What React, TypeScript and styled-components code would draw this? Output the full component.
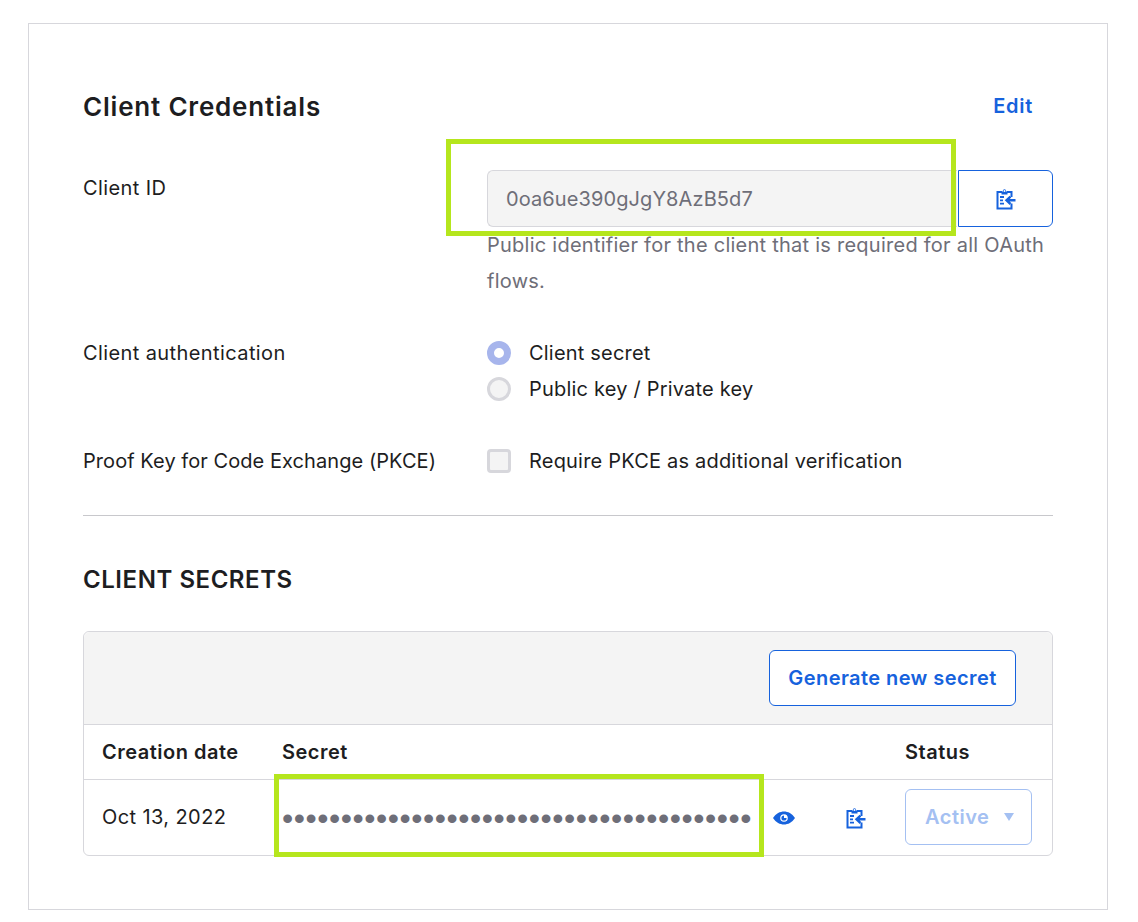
import React from 'react';
import styled, { createGlobalStyle } from 'styled-components';

const GlobalStyle = createGlobalStyle`
  html, body {
    margin: 0;
    padding: 0;
    background: #fff;
  }
  body {
    font-family: 'Inter', 'Liberation Sans', sans-serif;
    color: #1d1d21;
  }
`;

const BLUE = '#1662dd';

const ClipboardIcon = () => (
  <svg width="20" height="22" viewBox="0 0 20 22" fill="none">
    <path d="M6 4H1.5V20.5H15.5V15.5M15.5 9V4H11" stroke={BLUE} strokeWidth="2" />
    <path d="M5.5 6.5V3.5H6.8C6.8 .4 10.2 .4 10.2 3.5H11.5V6.5Z" fill={BLUE} />
    <circle cx="8.5" cy="3" r="1" fill="#fff" />
    <path d="M4 9H8M4 12.3H7M4 15.6H8" stroke={BLUE} strokeWidth="1.8" />
    <path d="M19.5 12.3H12M14.5 8.6L10.5 12.3L14.5 16" stroke={BLUE} strokeWidth="2.4" />
  </svg>
);

const EyeIcon = () => (
  <svg width="22" height="14" viewBox="0 0 22 14">
    <path
      fillRule="evenodd"
      d="M0 7C3 2.5 7 .5 11 .5S19 2.5 22 7C19 11.5 15 13.5 11 13.5S3 11.5 0 7ZM11 3.2A3.8 3.8 0 1 0 11 10.8 3.8 3.8 0 1 0 11 3.2Z"
      fill={BLUE}
    />
    <path d="M11 4.4A2.6 2.6 0 1 0 13.6 7H11Z" fill={BLUE} />
  </svg>
);

export default function App() {
  return (
    <>
      <GlobalStyle />
      <Card>
        <Header>
          <Title>Client Credentials</Title>
          <EditLink>Edit</EditLink>
        </Header>

        <Row>
          <Label>Client ID</Label>
          <Field>
            <CopyGroup>
              <ReadOnlyInput>0oa6ue390gJgY8AzB5d7</ReadOnlyInput>
              <CopyButton aria-label="Copy"><ClipboardIcon /></CopyButton>
              <Highlight />
            </CopyGroup>
            <Hint>Public identifier for the client that is required for all OAuth flows.</Hint>
          </Field>
        </Row>

        <AuthRow>
          <Label>Client authentication</Label>
          <Options>
            <Option><Radio $checked />Client secret</Option>
            <Option><Radio />Public key / Private key</Option>
          </Options>
        </AuthRow>

        <PkceRow>
          <Label $tight>Proof Key for Code Exchange (PKCE)</Label>
          <Option><Checkbox />Require PKCE as additional verification</Option>
        </PkceRow>

        <Divider />

        <SectionTitle>CLIENT SECRETS</SectionTitle>

        <Table>
          <TableBar>
            <GenerateButton>Generate new secret</GenerateButton>
          </TableBar>
          <HeadRow>
            <HeadCell>Creation date</HeadCell>
            <HeadCell>Secret</HeadCell>
            <HeadCell>Status</HeadCell>
          </HeadRow>
          <BodyRow>
            <DateCell>Oct 13, 2022</DateCell>
            <SecretCell>
              <Dots>{'•'.repeat(40)}</Dots>
              <EyeSlot><EyeIcon /></EyeSlot>
              <CopySlot><ClipboardIcon /></CopySlot>
              <SecretHighlight />
            </SecretCell>
            <StatusSelect>
              Active
              <Caret />
            </StatusSelect>
          </BodyRow>
        </Table>
      </Card>
    </>
  );
}

const Card = styled.div`
  box-sizing: border-box;
  width: 1080px;
  height: 887px;
  margin: 23px 0 0 28px;
  padding: 60px 54px 0 54px;
  border: 1px solid #d7d7dc;
`;
const Header = styled.div`
  display: flex;
  align-items: center;
  justify-content: space-between;
  padding-right: 20px;
  height: 44px;
  margin-bottom: 42px;
`;
const Title = styled.h2`
  margin: 0;
  font-size: 26px;
  font-weight: 600;
  letter-spacing: 0.8px;
`;
const EditLink = styled.a`
  font-size: 20px;
  font-weight: 600;
  letter-spacing: 0.7px;
  color: ${BLUE};
`;
const Row = styled.div`
  display: grid;
  grid-template-columns: 404px 566px;
`;
const AuthRow = styled(Row)`
  margin-top: 36px;
`;
const PkceRow = styled(Row)`
  margin-top: 36px;
  align-items: center;
`;
const Label = styled.div<{ $tight?: boolean }>`
  font-size: 20px;
  line-height: 36px;
  letter-spacing: ${(p) => (p.$tight ? '0.06px' : '0.4px')};
`;
const Field = styled.div`
  display: flex;
  flex-direction: column;
`;
const CopyGroup = styled.div`
  position: relative;
  display: flex;
  height: 57px;
`;
const ReadOnlyInput = styled.div`
  box-sizing: border-box;
  flex: 1;
  display: flex;
  align-items: center;
  padding-left: 18px;
  background: #f4f4f4;
  border: 1px solid #d7d7dc;
  border-right: 0;
  border-radius: 6px 0 0 6px;
  font-size: 20px;
  letter-spacing: 0.1px;
  color: #6e6e78;
`;
const CopyButton = styled.button`
  box-sizing: border-box;
  width: 95px;
  margin-left: 1px;
  display: flex;
  align-items: center;
  justify-content: center;
  background: #fff;
  border: 1px solid ${BLUE};
  border-radius: 0 6px 6px 0;
`;
const Highlight = styled.div`
  position: absolute;
  box-sizing: border-box;
  left: -41px;
  top: -31px;
  width: 510px;
  height: 97px;
  border: 5px solid #b5e61d;
`;
const Hint = styled.p`
  margin: 0;
  font-size: 20px;
  line-height: 36px;
  letter-spacing: 0.25px;
  color: #6e6e78;
`;
const Options = styled.div`
  display: flex;
  flex-direction: column;
`;
const Option = styled.label`
  display: flex;
  align-items: center;
  gap: 18px;
  font-size: 20px;
  line-height: 36px;
  letter-spacing: 0.2px;
`;
const Radio = styled.span<{ $checked?: boolean }>`
  box-sizing: border-box;
  width: 24px;
  height: 24px;
  border-radius: 50%;
  background: ${(p) => (p.$checked ? '#fff' : '#f4f4f4')};
  border: ${(p) => (p.$checked ? '7.5px solid #a7b5ec' : '3px solid #d7d7dc')};
`;
const Checkbox = styled.span`
  box-sizing: border-box;
  width: 24px;
  height: 24px;
  border-radius: 4px;
  background: #f4f4f4;
  border: 3px solid #d7d7dc;
`;
const Divider = styled.hr`
  margin: 36px 0 0;
  border: 0;
  border-top: 1px solid #c8c8cc;
`;
const SectionTitle = styled.h3`
  margin: 47px 0 34px;
  font-size: 24px;
  line-height: 34px;
  font-weight: 600;
  letter-spacing: 0.55px;
`;
const Table = styled.div`
  box-sizing: border-box;
  height: 225px;
  border: 1px solid #d7d7dc;
  border-radius: 6px;
  overflow: visible;
`;
const TableBar = styled.div`
  box-sizing: border-box;
  height: 93px;
  display: flex;
  align-items: center;
  justify-content: flex-end;
  padding-right: 36px;
  background: #f4f4f4;
  border-bottom: 1px solid #d7d7dc;
  border-radius: 6px 6px 0 0;
`;
const GenerateButton = styled.button`
  box-sizing: border-box;
  width: 247px;
  height: 56px;
  background: #fff;
  border: 1px solid ${BLUE};
  border-radius: 6px;
  color: ${BLUE};
  font-family: inherit;
  font-size: 20px;
  font-weight: 600;
  letter-spacing: 0.42px;
`;
const HeadRow = styled.div`
  box-sizing: border-box;
  height: 55px;
  display: grid;
  grid-template-columns: 180px 623px 1fr;
  align-items: center;
  padding-left: 18px;
  border-bottom: 1px solid #d7d7dc;
`;
const HeadCell = styled.div`
  font-size: 20px;
  font-weight: 600;
  letter-spacing: 0.5px;
`;
const BodyRow = styled.div`
  height: 75px;
  display: grid;
  grid-template-columns: 180px 623px 1fr;
  align-items: center;
  padding-left: 18px;
`;
const DateCell = styled.div`
  font-size: 20px;
  letter-spacing: 0.4px;
  margin-top: -2px;
`;
const SecretCell = styled.div`
  position: relative;
  display: flex;
  align-items: center;
  height: 100%;
`;
const Dots = styled.span`
  width: 479px;
  font-family: 'Liberation Sans', sans-serif;
  font-size: 32px;
  letter-spacing: 0.55px;
  line-height: 1;
  white-space: nowrap;
  color: #6e6e78;
`;
const EyeSlot = styled.span`
  display: flex;
  width: 73px;
  margin-left: 12px;
`;
const CopySlot = styled.span`
  display: flex;
`;
const SecretHighlight = styled.div`
  position: absolute;
  box-sizing: border-box;
  left: -8px;
  top: -6px;
  width: 490px;
  height: 83px;
  border: 5px solid #b5e61d;
`;
const StatusSelect = styled.div`
  box-sizing: border-box;
  width: 127px;
  height: 56px;
  margin-top: -2px;
  display: flex;
  align-items: center;
  gap: 15px;
  padding-left: 19px;
  border: 1px solid #a4c0f2;
  border-radius: 6px;
  font-size: 20px;
  font-weight: 600;
  letter-spacing: 0.5px;
  color: #a4c0f2;
`;
const Caret = styled.span`
  width: 0;
  height: 0;
  border-left: 5px solid transparent;
  border-right: 5px solid transparent;
  border-top: 8px solid #a4c0f2;
`;
